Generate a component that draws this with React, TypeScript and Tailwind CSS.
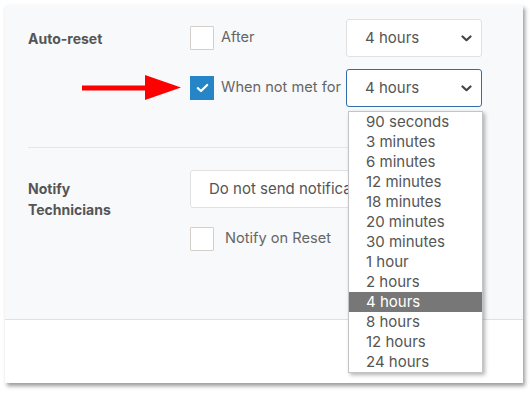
import React from "react";

const Chevron = () => (
  <svg width="11" height="7" viewBox="0 0 11 7" className="shrink-0">
    <path d="M1.5 1.5 L5.5 5.2 L9.5 1.5" fill="none" stroke="#444" strokeWidth="2.2" strokeLinecap="round" strokeLinejoin="round" />
  </svg>
);

const Checkbox = ({ checked }: { checked?: boolean }) =>
  checked ? (
    <div className="w-[24px] h-[24px] bg-[#2585c6] flex items-center justify-center shrink-0">
      <svg width="13" height="10" viewBox="0 0 13 10">
        <path d="M1.8 5.2 L5 8 L11.2 2" fill="none" stroke="#fff" strokeWidth="2.2" strokeLinecap="round" strokeLinejoin="round" />
      </svg>
    </div>
  ) : (
    <div className="w-[24px] h-[24px] bg-white border border-[#d5cfca] rounded-[1px] shrink-0" />
  );

const Select = ({ value, focused, className = "" }: { value: string; focused?: boolean; className?: string }) => (
  <div
    className={
      "h-[38px] bg-white rounded-[3px] border flex items-center pl-[18px] pr-[9px] justify-between text-[15px] text-[#555] " +
      (focused ? "border-[#2f6ea8] " : "border-[#e1e1e1] ") +
      className
    }
  >
    <span className="whitespace-nowrap overflow-hidden">{value}</span>
    <Chevron />
  </div>
);

const options = [
  "90 seconds",
  "3 minutes",
  "6 minutes",
  "12 minutes",
  "18 minutes",
  "20 minutes",
  "30 minutes",
  "1 hour",
  "2 hours",
  "4 hours",
  "8 hours",
  "12 hours",
  "24 hours",
];

export default function App() {
  return (
    <div
      className="w-[532px] h-[393px] bg-white p-[5px] overflow-hidden"
      style={{ fontFamily: "Inter, 'Noto Sans', sans-serif" }}
    >
      <div className="relative w-[518px] h-[378px] bg-[#f8f9fb] shadow-[2px_3px_4px_rgba(0,0,0,0.4)] flex flex-col">
        <div className="h-[314px] pl-[23px] pr-[41px] pt-[14px]">
          {/* Auto-reset */}
          <div className="flex">
            <div className="w-[162px] pt-[10px] text-[14px] font-bold text-[#555] leading-[20px]">Auto-reset</div>
            <div className="flex-1 flex flex-col gap-[12px]">
              <div className="flex items-center">
                <Checkbox />
                <span className="ml-[7px] text-[14.6px] text-[#666] flex-1">After</span>
                <Select value="4 hours" className="w-[136px]" />
              </div>
              <div className="flex items-center">
                <Checkbox checked />
                <span className="ml-[7px] text-[14.6px] text-[#666] flex-1 whitespace-nowrap">When not met for</span>
                <Select value="4 hours" focused className="w-[136px]" />
              </div>
            </div>
          </div>
          {/* annotation arrow */}
          <div className="h-0 relative">
            <svg className="absolute left-[54px] top-[-32px]" width="100" height="26" viewBox="0 0 100 26">
              <rect x="0" y="10.5" width="65" height="5" fill="#f00" />
              <polygon points="63,0 99,12.5 63,25" fill="#f00" />
            </svg>
          </div>
          <div className="mt-[40px] h-px bg-[#e6e6e6]" />
          {/* Notify */}
          <div className="flex mt-[22px]">
            <div className="w-[162px] pt-[8px] text-[14px] font-bold text-[#555] leading-[21px]">
              Notify
              <br />
              Technicians
            </div>
            <div className="flex-1 flex flex-col">
              <Select value="Do not send notifications" className="w-full h-[37px]" />
              <div className="flex items-center mt-[19px]">
                <Checkbox />
                <span className="ml-[11px] text-[14.6px] text-[#666]">Notify on Reset</span>
              </div>
            </div>
          </div>
        </div>
        <div className="flex-1 border-t border-[#e0e0e0] bg-white" />

        {/* dropdown list */}
        <div className="absolute left-[343px] top-[106px] w-[135px] bg-white border border-[#c4c4c4] shadow-[2px_2px_4px_rgba(0,0,0,0.3)]">
          {options.map((o) => (
            <div
              key={o}
              className={
                "h-[20px] leading-[20px] pl-[17px] text-[15px] " +
                (o === "4 hours" ? "bg-[#777] text-white" : "text-[#555]")
              }
            >
              {o}
            </div>
          ))}
        </div>
      </div>
    </div>
  );
}
